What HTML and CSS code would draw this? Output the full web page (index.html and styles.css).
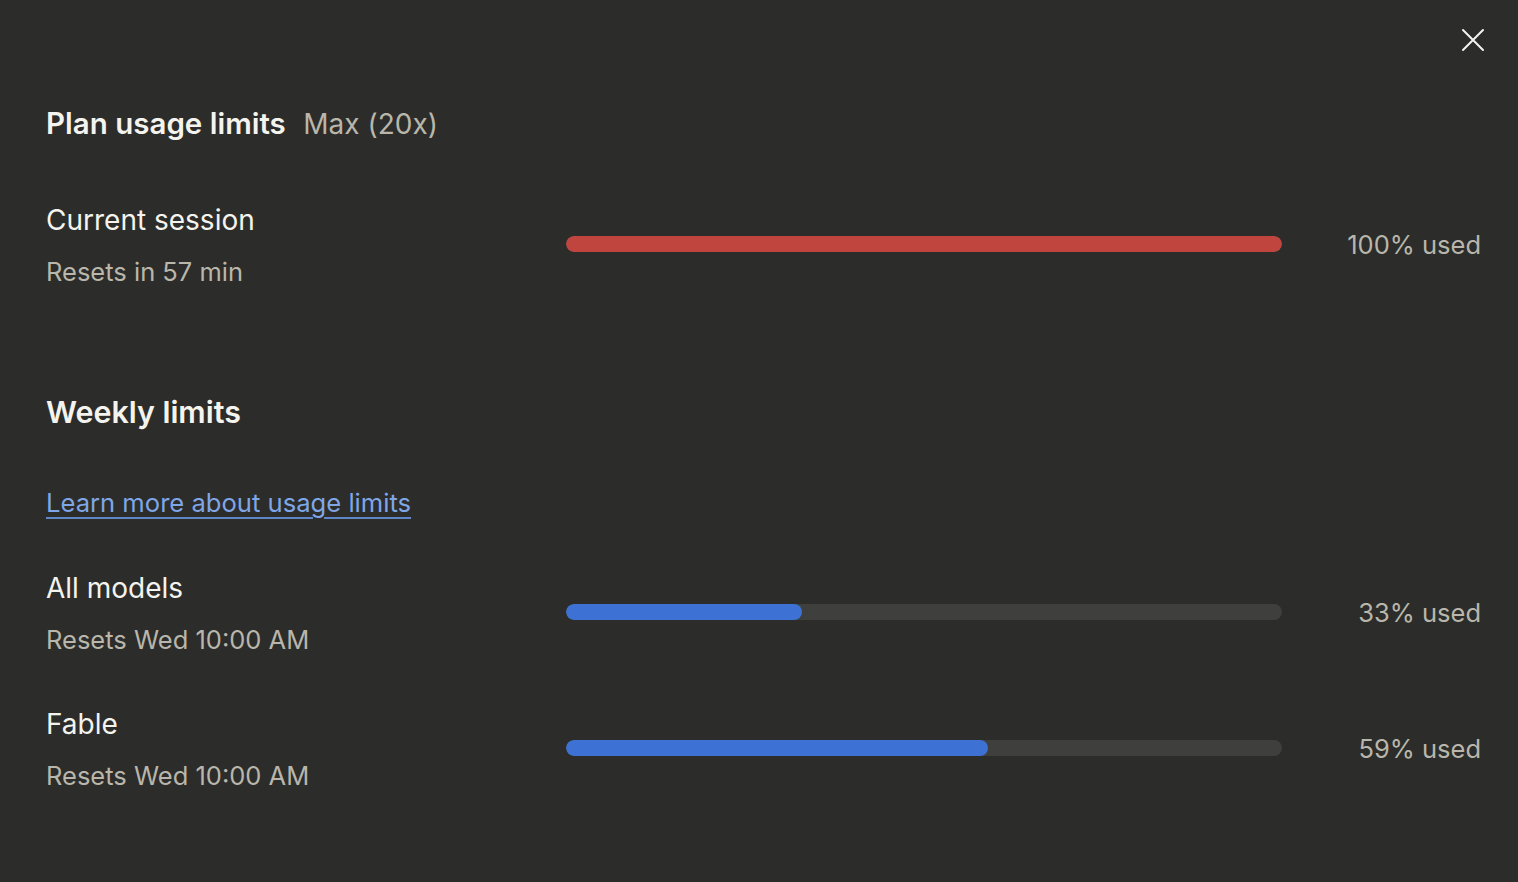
FILE: index.html
```html
<!DOCTYPE html>
<html lang="en">
<head>
  <meta charset="UTF-8">
  <title>Plan usage limits</title>
  <link rel="stylesheet" href="styles.css">
</head>
<body>

  <div class="dialog">
    <button class="close" aria-label="Close">
      <svg width="24" height="24" viewBox="0 0 24 24" fill="none" stroke="currentColor" stroke-width="2" stroke-linecap="round">
        <path d="M2 2 L22 22 M22 2 L2 22"/>
      </svg>
    </button>

    <h2 class="title">Plan usage limits <span class="plan">Max (20x)</span></h2>

    <div class="row first">
      <div class="label">
        <div class="name">Current session</div>
        <div class="reset">Resets in 57 min</div>
      </div>
      <div class="track"><div class="fill red" style="width: 100%"></div></div>
      <div class="used">100% used</div>
    </div>

    <h2 class="section">Weekly limits</h2>

    <a class="learn" href="#">Learn more about usage limits</a>

    <div class="row">
      <div class="label">
        <div class="name">All models</div>
        <div class="reset">Resets Wed 10:00 AM</div>
      </div>
      <div class="track"><div class="fill" style="width: 33%"></div></div>
      <div class="used">33% used</div>
    </div>

    <div class="row">
      <div class="label">
        <div class="name">Fable</div>
        <div class="reset">Resets Wed 10:00 AM</div>
      </div>
      <div class="track"><div class="fill" style="width: 59%"></div></div>
      <div class="used">59% used</div>
    </div>
  </div>

</body>
</html>
```

FILE: styles.css
```css
html, body {
  margin: 0;
  height: 100%;
}

body {
  font-family: 'Inter', sans-serif;
  background: #2c2c2a;
  color: #f4f3ee;
}

.dialog {
  position: relative;
  padding: 99px 37px 0 46px;
}

.close {
  position: absolute;
  top: 28px;
  right: 33px;
  width: 24px;
  height: 24px;
  padding: 0;
  border: none;
  background: none;
  color: #f4f3ee;
  cursor: pointer;
}

.close svg {
  display: block;
}

h2 {
  margin: 0;
  font-size: 29.5px;
  font-weight: 600;
  line-height: 48px;
}

.plan {
  margin-left: 10px;
  font-size: 28px;
  font-weight: 400;
  color: #b9b6ab;
}

.row {
  display: grid;
  grid-template-columns: 520px 716px 1fr;
  align-items: center;
  margin-top: 32px;
}

.row.first {
  margin-top: 46px;
}

.name {
  font-size: 28px;
  line-height: 52px;
}

.reset {
  font-size: 25.5px;
  line-height: 52px;
  color: #b9b6ab;
}

.track {
  height: 16px;
  margin-bottom: 4px;
  border-radius: 8px;
  background: #3f3f3d;
  overflow: hidden;
}

.fill {
  height: 100%;
  border-radius: 8px;
  background: #3d72d4;
}

.fill.red {
  background: #c0453f;
}

.used {
  margin-bottom: 4px;
  text-align: right;
  font-size: 25.5px;
  color: #b9b6ab;
}

.section {
  margin-top: 90px;
  font-size: 30.4px;
}

.learn {
  display: inline-block;
  margin-top: 51px;
  margin-bottom: 12px;
  font-size: 25.6px;
  color: #7fa6e6;
  text-decoration: underline;
  text-decoration-color: #5f86c6;
  text-underline-offset: 5px;
  text-decoration-thickness: 2px;
}
```
